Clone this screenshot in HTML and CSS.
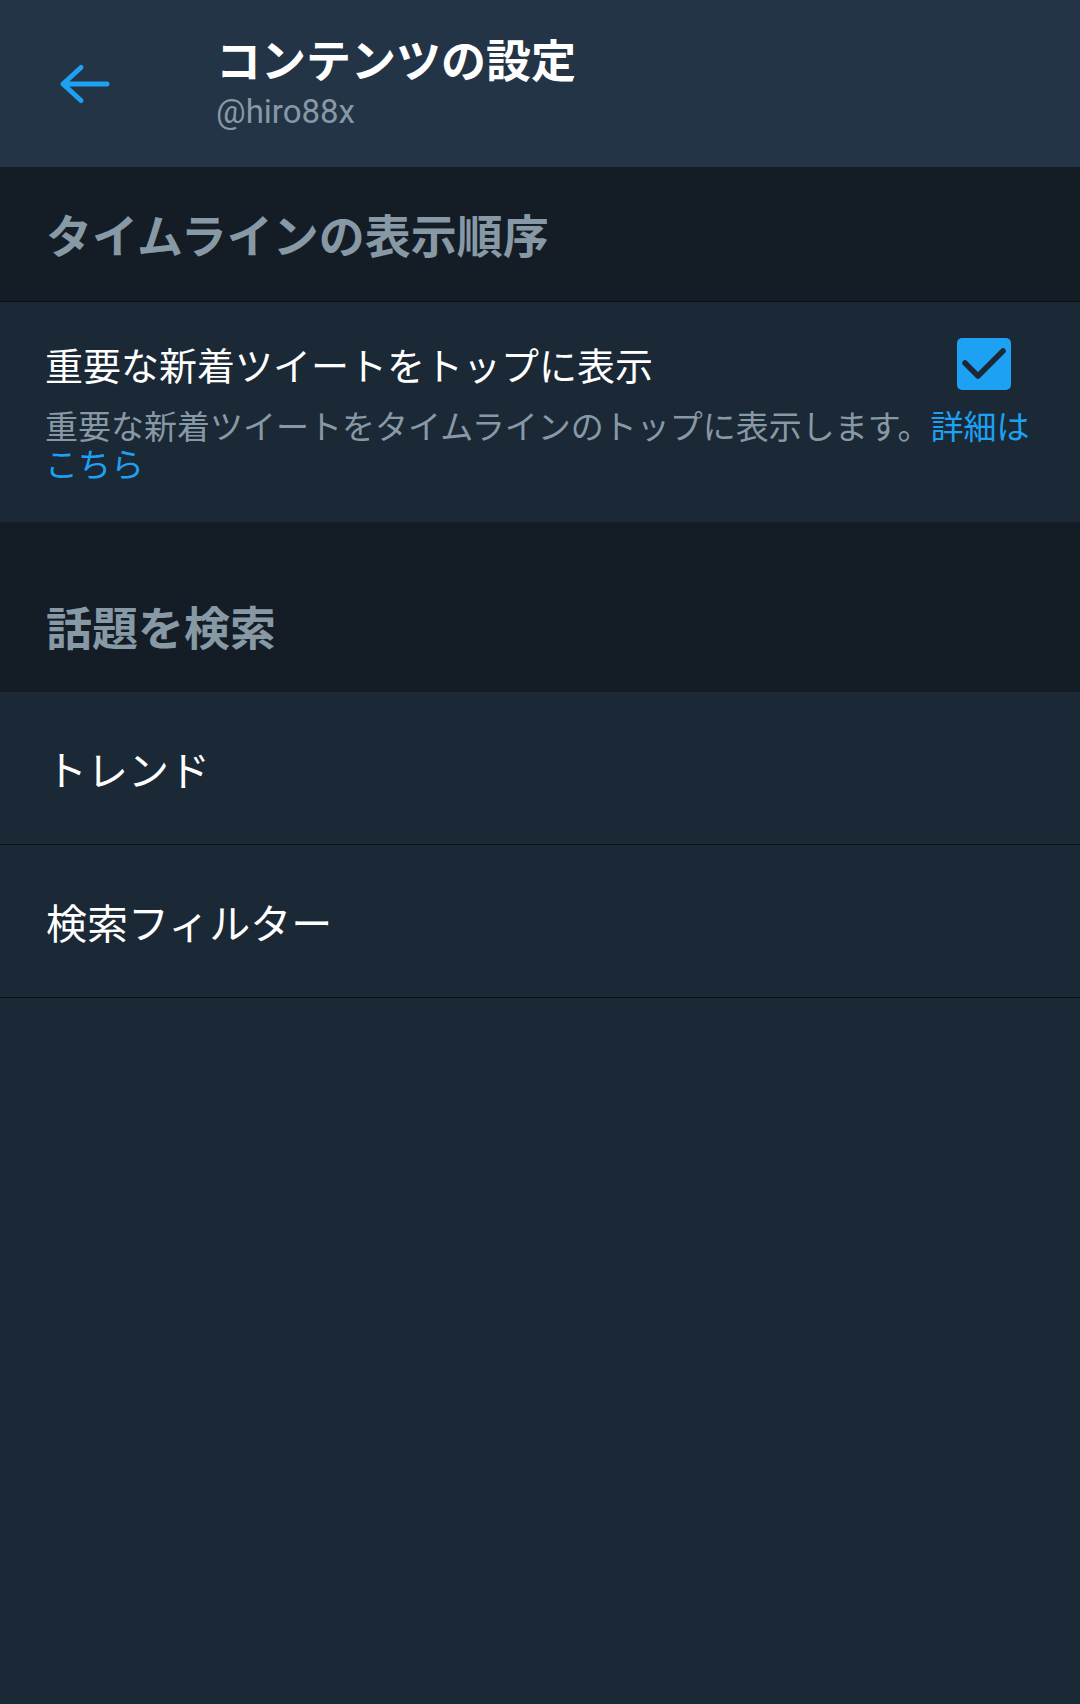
FILE: index.html
```html
<!DOCTYPE html>
<html lang="ja">
<head>
<meta charset="utf-8">
<title>コンテンツの設定</title>
<link rel="stylesheet" href="styles.css">
</head>
<body>
<header class="header">
  <svg class="back" viewBox="0 0 56 46" aria-hidden="true">
    <path d="M50 23 H6 M24 6.5 L6 23 L24 39.5" fill="none" stroke="#1da1f2" stroke-width="5" stroke-linecap="round" stroke-linejoin="round"/>
  </svg>
  <div class="titles">
    <div class="title">コンテンツの設定</div>
    <div class="handle">@hiro88x</div>
  </div>
</header>

<div class="section-head first">タイムラインの表示順序</div>

<div class="setting">
  <div class="setting-top">
    <div class="setting-title">重要な新着ツイートをトップに表示</div>
    <svg class="checkbox" viewBox="0 0 54 52" aria-hidden="true">
      <rect x="0" y="0" width="54" height="52" rx="5" fill="#1da1f2"/>
      <polyline points="8,25 21,38 46,13" fill="none" stroke="#1b2836" stroke-width="5.5" stroke-linecap="round" stroke-linejoin="round"/>
    </svg>
  </div>
  <div class="setting-desc">重要な新着ツイートをタイムラインのトップに表示します。<span class="link">詳細は</span><span class="link">こちら</span></div>
</div>

<div class="section-head second">話題を検索</div>

<div class="row">トレンド</div>
<div class="row">検索フィルター</div>
</body>
</html>
```

FILE: styles.css
```css
html, body {
  margin: 0;
  padding: 0;
}

body {
  width: 1080px;
  min-height: 1704px;
  background: #1b2836;
  font-family: "Noto Sans CJK JP", "Noto Sans", sans-serif;
  color: #ffffff;
}

.header {
  height: 167px;
  box-sizing: border-box;
  background: #243447;
  display: flex;
  align-items: flex-start;
  padding: 35px 0 0 57px;
}

.back {
  width: 56px;
  height: 46px;
  margin-top: 26px;
  flex-shrink: 0;
}

.titles {
  margin-left: 103px;
}

.title {
  font-size: 45px;
  font-weight: 700;
  line-height: 48px;
  color: #ffffff;
}

.handle {
  font-family: Roboto, "Noto Sans", sans-serif;
  font-size: 33px;
  line-height: 36px;
  color: #8899a6;
  margin-top: 11px;
}

.section-head {
  background: #141d26;
  padding: 39px 46px 41px;
  font-size: 46px;
  font-weight: 700;
  line-height: 54px;
  color: #8899a6;
}

.section-head.first {
  border-bottom: 1px solid #0b1015;
}

.section-head.second {
  padding-top: 76px;
  padding-bottom: 40px;
}

.setting {
  padding: 36px 40px 40px 45px;
}

.setting-top {
  display: flex;
  align-items: center;
  justify-content: space-between;
}

.setting-title {
  font-size: 38px;
  line-height: 52px;
  color: #ffffff;
}

.checkbox {
  width: 54px;
  height: 52px;
  margin-right: 29px;
  flex-shrink: 0;
}

.setting-desc {
  margin-top: 16px;
  font-size: 33px;
  line-height: 38px;
  color: #8899a6;
}

.link {
  color: #1da1f2;
}

.row {
  height: 152px;
  display: flex;
  align-items: center;
  padding: 0 46px;
  font-size: 41px;
  color: #ffffff;
  border-bottom: 1px solid #0b1015;
}
```
